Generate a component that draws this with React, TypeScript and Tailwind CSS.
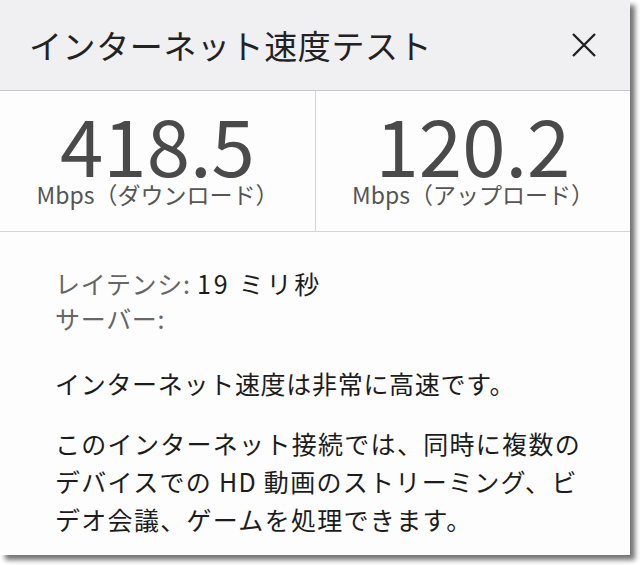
import React from "react";

const font = { fontFamily: '"Noto Sans CJK JP", "Noto Sans", sans-serif' };

export default function App() {
  return (
    <div className="w-[640px] h-[565px] bg-white overflow-hidden" style={font}>
      <div className="w-[630px] h-[555px] bg-[#fdfdfd] shadow-[5px_5px_5px_rgba(0,0,0,0.55)] flex flex-col">
        <div className="h-[91px] bg-[#f0f0f2] border-b border-[#c9c9cb] flex items-center justify-between pl-[29px] pr-[33px]">
          <div className="text-[33px] leading-none text-[#222] tracking-[0.6px]">インターネット速度テスト</div>
          <svg width="26" height="26" viewBox="0 0 26 26" className="text-[#222]">
            <path d="M2 2 L24 24 M24 2 L2 24" stroke="currentColor" strokeWidth="2.4" strokeLinecap="butt" />
          </svg>
        </div>
        <div className="h-[141px] grid grid-cols-[316px_1fr] border-b border-[#d4d4d6]">
          <div className="border-r border-[#d4d4d6] flex flex-col items-center pt-[13px]">
            <div className="text-[78px] leading-[78px] text-[#4a4a4a]">418.5</div>
            <div className="text-[23px] leading-[24px] text-[#555]">Mbps（ダウンロード）</div>
          </div>
          <div className="flex flex-col items-center pt-[13px]">
            <div className="text-[78px] leading-[78px] text-[#4a4a4a]">120.2</div>
            <div className="text-[23px] leading-[24px] text-[#555]">Mbps（アップロード）</div>
          </div>
        </div>
        <div className="pl-[55px] pr-[10px] pt-[34px] text-[25px] text-[#1c1c1c] tracking-[0.7px]">
          <div className="leading-[35px] whitespace-nowrap">
            <span className="text-[#666]">レイテンシ:</span>{" "}
            <span className="tracking-[2.8px]">19 ミリ秒</span>
          </div>
          <div className="leading-[35px] text-[#666]">サーバー:</div>
          <div className="leading-[38px] mt-[28px] whitespace-nowrap">インターネット速度は非常に高速です。</div>
          <div className="leading-[38px] mt-[22px] whitespace-nowrap tracking-[1.3px]">
            このインターネット接続では、同時に複数の<br />
            デバイスでの HD 動画のストリーミング、ビ<br />
            デオ会議、ゲームを処理できます。
          </div>
        </div>
      </div>
    </div>
  );
}
